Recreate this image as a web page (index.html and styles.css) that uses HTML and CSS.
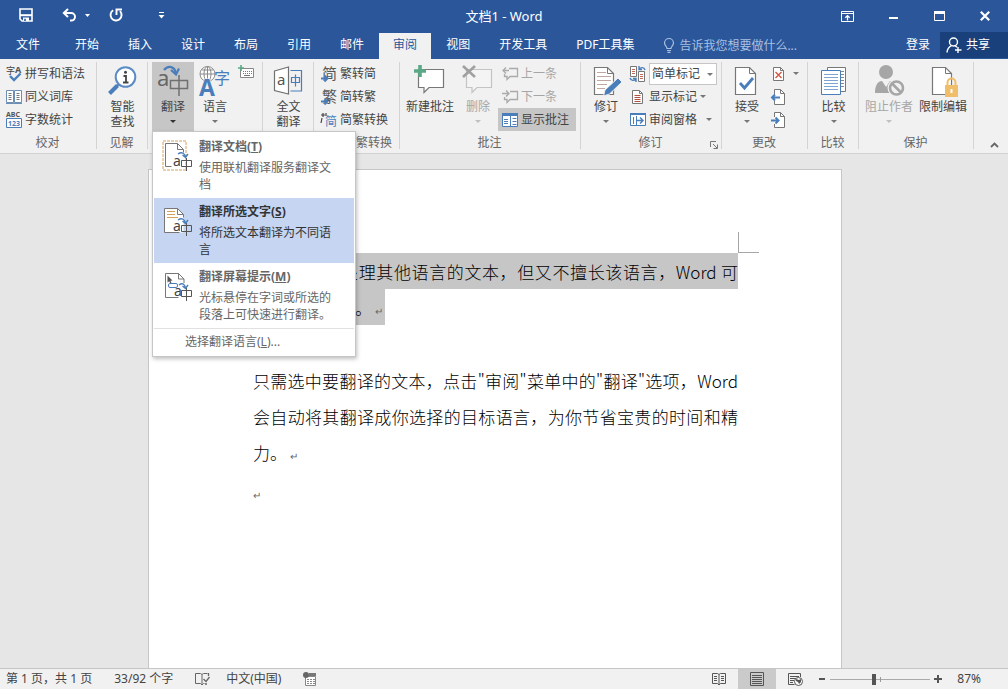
FILE: index.html
```html
<!DOCTYPE html>
<html lang="zh-CN">
<head>
<meta charset="utf-8">
<title>文档1 - Word</title>
<link rel="stylesheet" href="styles.css">
</head>
<body>
<div class="app">
  <header class="titlebar">
    <div class="quick">
      <button class="q-save" aria-label="保存"><svg width="14" height="14" viewBox="0 0 14 14"><path d="M1 1h12v12H3l-2-2z" fill="none" stroke="#fff" stroke-width="1.6"/><path d="M1 7.2h12" stroke="#fff" stroke-width="2"/><path d="M4 9.5h6V13H4z" fill="#fff"/><path d="M5.2 10.8h1.6V13H5.2z" fill="#2b579a"/></svg></button>
      <button class="q-undo" aria-label="撤消"><svg width="15" height="14" viewBox="0 0 15 14"><path d="M6 1 1.8 5 6 9M2 5h7.2a3.7 3.7 0 0 1 0 7.6H8" fill="none" stroke="#fff" stroke-width="2"/></svg></button>
      <button class="q-more" aria-label="撤消列表"><svg width="5" height="3" viewBox="0 0 5 3"><path d="M0 0h5L2.500 3z" fill="#fff"/></svg></button>
      <button class="q-redo" aria-label="重复"><svg width="14" height="14" viewBox="0 0 14 14"><path d="M11 3.200A5.500 5.500 0 1 1 4.200 2.300" fill="none" stroke="#fff" stroke-width="1.900"/><path d="M7.500 7V1.500H13" fill="none" stroke="#fff" stroke-width="1.900"/></svg></button>
      <button class="q-custom" aria-label="自定义快速访问工具栏"><svg width="7" height="7" viewBox="0 0 7 7"><path d="M1 .5h5" stroke="#fff"/><path d="M.5 3h6l-3 3.500z" fill="#fff"/></svg></button>
    </div>
    <h1 class="doc-title">文档1 - Word</h1>
    <div class="window-buttons">
      <button aria-label="功能区显示选项"><svg width="13" height="11" viewBox="0 0 13 11"><path d="M.5.5h12v10H.5zM.5 2.500h12" fill="none" stroke="#fff"/><path d="M6.500 9.500V5M4.300 6.800l2.200-2.200 2.200 2.200" fill="none" stroke="#fff" stroke-width="1.300"/></svg></button>
      <button aria-label="最小化"><svg width="9" height="11" viewBox="0 0 9 11"><path d="M0 7h9" stroke="#fff" stroke-width="2"/></svg></button>
      <button aria-label="最大化"><svg width="11" height="10" viewBox="0 0 11 10"><path d="M.5.5h10v9H.5z" fill="none" stroke="#fff"/><path d="M0 1.500h11" stroke="#fff" stroke-width="3"/></svg></button>
      <button aria-label="关闭"><svg width="10" height="10" viewBox="0 0 10 10"><path d="m.8.8 8.400 8.400m0-8.400L.8 9.200" stroke="#fff" stroke-width="2.200"/></svg></button>
    </div>
  </header>

  <nav class="tabs">
    <button class="tab tab-file">文件</button>
    <button class="tab">开始</button>
    <button class="tab">插入</button>
    <button class="tab">设计</button>
    <button class="tab">布局</button>
    <button class="tab">引用</button>
    <button class="tab">邮件</button>
    <button class="tab tab-active">审阅</button>
    <button class="tab">视图</button>
    <button class="tab">开发工具</button>
    <button class="tab">PDF工具集</button>
    <label class="tell-me"><svg width="12" height="15" viewBox="0 0 12 15"><path d="M4 10.500C4 8.500 1.500 7.800 1.500 5a4.500 4.500 0 0 1 9 0C10.500 7.800 8 8.500 8 10.500zM4 12.500h4M4.500 14.300h3" fill="none" stroke="#a9bfe0" stroke-width="1.200"/></svg><input type="text" placeholder="告诉我您想要做什么..." aria-label="告诉我您想要做什么"></label>
    <button class="sign-in">登录</button>
    <button class="share"><svg width="16" height="16" viewBox="0 0 16 16"><circle cx="7.500" cy="5" r="4" fill="none" stroke="#fff" stroke-width="1.400"/><path d="M1 15.500c.3-3.500 2-5.500 4.500-6.800M9 8.600l2 1.600M12 10v6M9 13h6.500" fill="none" stroke="#fff" stroke-width="1.400"/></svg>共享</button>
  </nav>

  <section class="ribbon">
    <div class="group g-proof">
      <div class="group-body">
        <div class="rows">
          <button class="row"><svg width="16" height="16" viewBox="0 0 16 16"><text x="0" y="8" font-size="9" fill="#444">字</text><text x="9" y="7" font-size="9" font-weight="bold" fill="#555">A</text><path d="m4 10 4 4 6.500-6.500" fill="none" stroke="#4a7ebb" stroke-width="2.400"/></svg>拼写和语法</button>
          <button class="row"><svg width="16" height="16" viewBox="0 0 16 16"><path d="M.5 1.500h7v12h-7zM8.500 1.500h7v12h-7z" fill="#fff" stroke="#6d8fb5"/><path d="M0 14.500h16" stroke="#6d8fb5"/><path d="M2.500 4.500h3m-3 2h3m-3 2h3m-3 2h3m5-6h3m-3 2h3m-3 2h3m-3 2h3" stroke="#777"/></svg>同义词库</button>
          <button class="row"><svg width="16" height="16" viewBox="0 0 16 16"><text x="0" y="5" font-size="7" font-weight="bold" fill="#555">ABC</text><path d="M.5 6.500h15v9H.5z" fill="#fff" stroke="#4a7ebb"/><text x="2" y="14" font-size="7" font-weight="bold" fill="#4a7ebb">123</text></svg>字数统计</button>
        </div>
      </div>
      <div class="group-label">校对</div>
    </div>

    <div class="group g-insight">
      <div class="group-body">
        <button class="large w-46"><svg width="32" height="32" viewBox="0 0 32 32"><path d="M2.500 28.500l8-8" stroke="#4a7ebb" stroke-width="4"/><path d="M10 21l3-3" stroke="#4a7ebb" stroke-width="2"/><circle cx="18.500" cy="12" r="9.800" fill="#fff" stroke="#5c8cc4" stroke-width="2"/><circle cx="18.500" cy="7.300" r="1.500" fill="#444"/><path d="M16.500 11h2.500v6.500M16 17.500h5.500" fill="none" stroke="#444" stroke-width="1.800"/></svg><span>智能</span><span>查找</span></button>
      </div>
      <div class="group-label">见解</div>
    </div>

    <div class="group g-lang">
      <div class="group-body">
        <div class="menu-anchor">
          <button class="large w-42 pressed" aria-haspopup="menu" aria-expanded="true"><svg width="32" height="32" viewBox="0 0 32 32"><text x="0" y="21" font-size="22" fill="#666">a</text><path d="M13.500 15.500h17v8h-17zM22 10v21" fill="none" stroke="#707070" stroke-width="1.500"/><path d="M7 5c4-5 11-4 12 4" fill="none" stroke="#4a7ebb" stroke-width="2.200"/><path d="m14 5 5 4.500 3-6" fill="none" stroke="#4a7ebb" stroke-width="2.200"/></svg><span>翻译</span><i class="caret caret-dark"></i></button>
          <div class="menu" role="menu">
            <button class="menu-item" role="menuitem">
              <svg width="32" height="34" viewBox="0 0 32 34"><path d="M1 1h23v29H1z" fill="none" stroke="#d2a15c" stroke-dasharray="3 1"/><path d="M3.500 3.500h12l6 6v3M3.500 3.500v23h6M15.500 3.500v6h6" fill="none" stroke="#777"/><text x="11" y="26" font-size="14" fill="#444">a</text><path d="M19.500 20.500h10v6h-10zM24.500 18v13" fill="none" stroke="#555"/><path d="M16 14c4-3 7 0 7.500 3M20.500 15l3 2.500 2.500-3.500" fill="none" stroke="#4a7ebb" stroke-width="1.400"/></svg>
              <span class="menu-text"><b>翻译文档(<u>T</u>)</b><span>使用联机翻译服务翻译文档</span></span>
            </button>
            <button class="menu-item selected" role="menuitem">
              <svg width="32" height="34" viewBox="0 0 32 34"><path d="M2.500 3.500h13l6 6v18h-19z" fill="#fff"/><path d="M2.500 27.500v-24h13l6 6v3M2.500 27.500h15M15.500 3.500v6h6" fill="none" stroke="#777"/><path d="M5 6.500h8m-8 3h8m-8 3h11" stroke="#d2a15c"/><text x="11" y="26" font-size="14" fill="#444">a</text><path d="M19.500 20.500h10v6h-10zM24.500 18v13" fill="none" stroke="#555"/><path d="M16 15c4-3 7 0 7.500 3M20.500 16l3 2.500 2.500-3.500" fill="none" stroke="#4a7ebb" stroke-width="1.400"/></svg>
              <span class="menu-text"><b>翻译所选文字(<u>S</u>)</b><span>将所选文本翻译为不同语言</span></span>
            </button>
            <button class="menu-item" role="menuitem">
              <svg width="32" height="34" viewBox="0 0 32 34"><path d="M3.500 3.500h13l5.500 5.500v4M3.500 3.500v24h13M16.500 3.500v5.500h5.500" fill="none" stroke="#777"/><path d="m5.500 5.500 5 5-2 .3 1.200 2.700-1.200.5-1.200-2.700-1.800 1.200z" fill="#555"/><rect x="6.500" y="13.500" width="9" height="4" rx="1.500" fill="#fff" stroke="#4a7ebb"/><text x="12" y="26" font-size="14" fill="#444">a</text><path d="M19.500 20.500h10v6h-10zM24.500 18v13" fill="none" stroke="#555"/><path d="M17 15c4-3 6 0 6.500 3M20.500 16l3 2.500 2.500-3.500" fill="none" stroke="#4a7ebb" stroke-width="1.400"/></svg>
              <span class="menu-text"><b>翻译屏幕提示(<u>M</u>)</b><span>光标悬停在字词或所选的段落上可快速进行翻译。</span></span>
            </button>
            <button class="menu-last" role="menuitem">选择翻译语言(<u>L</u>)...</button>
          </div>
        </div>
        <button class="large w-42"><svg width="32" height="32" viewBox="0 0 32 32"><g fill="#fff" stroke="#8a8a8a"><circle cx="8.500" cy="9" r="7.500"/><ellipse cx="8.500" cy="9" rx="3.500" ry="7.500"/><path d="M8.500 1.500v15M1 9h15M3 5h11"/></g><text x="15" y="19" font-size="16" fill="#4a7ebb">字</text><text x="0" y="31" font-size="23" font-weight="bold" fill="#4a7ebb" stroke="#f1f1f1" stroke-width="1" paint-order="stroke">A</text></svg><span>语言</span><i class="caret"></i></button>
        <button class="icon-only" aria-label="输入法键盘"><svg width="16" height="14" viewBox="0 0 16 14"><path d="M2.500 3.500h13v9h-13z" fill="#fff" stroke="#888"/><path d="M5 6.500h9M5 8.500h9" stroke="#777" stroke-dasharray="1 1"/><path d="M6 10.500h6" stroke="#777"/><path d="M3 0v6M0 3h6" stroke="#5ba886" stroke-width="1.600"/></svg></button>
      </div>
      <div class="group-label">语言</div>
    </div>

    <div class="group g-full">
      <div class="group-body">
        <button class="large w-46"><svg width="32" height="32" viewBox="0 0 32 32"><path d="M1.500 6l14-4v27l-14-3.500z" fill="#fff" stroke="#707070" stroke-width="1.200"/><text x="4" y="20" font-size="15" fill="#555">a</text><path d="M17.500 5.500h11v20.500h-11" fill="none" stroke="#4a7ebb" stroke-width="1.200"/><path d="M18.500 12.500h8v5h-8zM22.500 9.500v12" fill="none" stroke="#4a7ebb" stroke-width="1.200"/></svg><span>全文</span><span>翻译</span></button>
      </div>
    </div>

    <div class="group g-convert">
      <div class="group-body">
        <div class="rows">
          <button class="row"><svg width="16" height="16" viewBox="0 0 16 16"><text x="1" y="13" font-size="15" fill="#555">简</text><path d="M0 12.500h6M3.500 9.500l3 3-3 3" fill="none" stroke="#4a7ebb" stroke-width="1.800"/></svg>繁转简</button>
          <button class="row"><svg width="16" height="16" viewBox="0 0 16 16"><text x="1" y="13" font-size="15" fill="#555">繁</text><path d="M0 12.500h6M3.500 9.500l3 3-3 3" fill="none" stroke="#4a7ebb" stroke-width="1.800"/></svg>简转繁</button>
          <button class="row"><svg width="16" height="16" viewBox="0 0 16 16"><text x="4" y="14" font-size="12" fill="#4a7ebb">简</text><path d="M2 1v4M0 3h4M1 6l-1 5M5 1v3" stroke="#444" stroke-width="1.200"/></svg>简繁转换</button>
        </div>
      </div>
      <div class="group-label">中文简繁转换</div>
    </div>

    <div class="group g-comment">
      <div class="group-body">
        <button class="large w-56"><svg width="32" height="32" viewBox="0 0 32 32"><path d="M4.500 4.500h25v18H15l-5 5v-5H4.500z" fill="#fff" stroke="#777" stroke-width="1.200"/><path d="M6 0v12M0 6h12" stroke="#5ba886" stroke-width="3.600"/></svg><span>新建批注</span></button>
        <button class="large w-40 off" disabled><svg width="32" height="32" viewBox="0 0 32 32"><path d="M4.500 4.500h25v18H15l-5 5v-5H4.500z" fill="#f4f4f4" stroke="#c4c4c4" stroke-width="1.200"/><path d="m1 1 12 11M13 1 1 12" stroke="#a0a0a0" stroke-width="2.600"/></svg><span>删除</span><i class="caret"></i></button>
        <div class="rows">
          <button class="row row-pad off" disabled><svg width="16" height="16" viewBox="0 0 16 16"><path d="M7 2.500h8.500v8H8l-3 3v-3H2.500V8M1 4.500h6M4 1.500l-3 3 3 3" fill="none" stroke="#aaa" stroke-width="1.300"/></svg>上一条</button>
          <button class="row row-pad off" disabled><svg width="16" height="16" viewBox="0 0 16 16"><path d="M8 2.500h7.500v8H8l-3 3v-3H2.500V8M0 4.500h7M4 1.500l3 3-3 3" fill="none" stroke="#aaa" stroke-width="1.300"/></svg>下一条</button>
          <button class="row row-pad pressed"><svg width="16" height="16" viewBox="0 0 16 16"><path d="M.5 1.500h15v13H.5z" fill="#fff" stroke="#4a7ebb"/><path d="M0 2.500h16" stroke="#4a7ebb" stroke-width="3"/><path d="M8.500 4v10" stroke="#4a7ebb"/><path d="M2 7.500h4m-4 2h4m-4 2h4m4.500-5h4m-4 3h4m-4 3h4" stroke="#4a7ebb"/></svg>显示批注</button>
        </div>
      </div>
      <div class="group-label">批注</div>
    </div>

    <div class="group g-track">
      <div class="group-body">
        <button class="large w-46"><svg width="32" height="32" viewBox="0 0 32 32"><path d="M4.500 2.500h13l6 6v21h-19z" fill="#fff" stroke="#777" stroke-width="1.200"/><path d="M17.500 2.500v6h6" fill="none" stroke="#777"/><path d="M7 7.500h9m-9 4h14m-14 4h14m-14 4h10m-10 4h8" stroke="#c0a8a0"/><path d="m13.500 31 1.500-6 13-12 4 4-12.500 12z" fill="#4a7ebb" stroke="#f1f1f1"/></svg><span>修订</span><i class="caret"></i></button>
        <div class="rows">
          <div class="row"><svg width="16" height="16" viewBox="0 0 16 16"><path d="M.5.5h6v10h-6zM8.500 5.500h6v10h-6z" fill="#fff" stroke="#777"/><path d="M2 3.500h3m-3 2h3m-3 2h3m5 1h3m-3 2h3m-3 2h3" stroke="#c06a5a"/><path d="M15 4c-1-3-4-3-6-1M9 0v3.500h3M0 12c1 3 4 3 6 1M6 16v-3.500H3" fill="none" stroke="#4a7ebb" stroke-width="1.400"/></svg><span class="combo"><select aria-label="显示以供审阅"><option>简单标记</option></select><i class="caret"></i></span></div>
          <button class="row"><svg width="16" height="16" viewBox="0 0 16 16"><path d="M2.500 1.500h7l3 3v10h-10z" fill="#fff" stroke="#777"/><path d="M9.500 1.500v3h3" fill="none" stroke="#777"/><path d="M4.500 6.500h6m-6 2h6m-6 2h6m-6 2h6" stroke="#b5503c"/></svg>显示标记<i class="caret"></i></button>
          <button class="row"><svg width="16" height="16" viewBox="0 0 16 16"><path d="M.5 1.500h15v12H.5z" fill="#fff" stroke="#4a7ebb"/><path d="M0 2h16" stroke="#4a7ebb" stroke-width="2"/><path d="M3.500 5v7M6.500 4v9" stroke="#4a7ebb"/><path d="M7 8.500h6M10 5.500l3 3-3 3" fill="none" stroke="#4a7ebb" stroke-width="1.400"/></svg>审阅窗格<i class="caret caret-far"></i></button>
        </div>
      </div>
      <div class="group-label">修订</div>
      <button class="launcher" aria-label="修订选项"><svg width="8" height="8" viewBox="0 0 8 8"><path d="M.5 6V.5H6M3 3l4 4M7.500 3.500v4h-4" fill="none" stroke="#777"/></svg></button>
    </div>

    <div class="group g-change">
      <div class="group-body">
        <button class="large w-46"><svg width="32" height="32" viewBox="0 0 32 32"><path d="M4.500 2.500h14l6 6v21h-20z" fill="#fff" stroke="#777" stroke-width="1.200"/><path d="M18.500 2.500v6h6" fill="none" stroke="#777"/><path d="m9 18 4.500 5 8.500-10" fill="none" stroke="#4a7ebb" stroke-width="2.800"/></svg><span>接受</span><i class="caret"></i></button>
        <div class="rows">
          <button class="row row-wide" aria-label="拒绝"><svg width="16" height="16" viewBox="0 0 16 16"><path d="M2.500 1.500h7l3 3v10h-10z" fill="#fff" stroke="#777"/><path d="M9.500 1.500v3h3" fill="none" stroke="#777"/><path d="m4.500 6 6 6m0-6-6 6" stroke="#d0563f" stroke-width="1.300"/></svg><i class="caret"></i></button>
          <button class="row" aria-label="上一处修订"><svg width="16" height="16" viewBox="0 0 16 16"><path d="M3.500 5V.5h6l4 4v11h-10V12" fill="#fff" stroke="#777"/><path d="M9.500.5v4h4" fill="none" stroke="#777"/><path d="M1 8.500h8M4 5.500l-3 3 3 3" fill="none" stroke="#4a7ebb" stroke-width="2"/></svg></button>
          <button class="row" aria-label="下一处修订"><svg width="16" height="16" viewBox="0 0 16 16"><path d="M3.500 5V.5h6l4 4v11h-10V12" fill="#fff" stroke="#777"/><path d="M9.500.5v4h4" fill="none" stroke="#777"/><path d="M0 8.500h7M4.500 5.500l3 3-3 3" fill="none" stroke="#4a7ebb" stroke-width="2"/></svg></button>
        </div>
      </div>
      <div class="group-label">更改</div>
    </div>

    <div class="group g-compare">
      <div class="group-body">
        <button class="large w-46"><svg width="32" height="32" viewBox="0 0 32 32"><path d="M9.500 2.500h18v24h-18z" fill="#fff" stroke="#777"/><path d="M22 6.500h4m-4 3h4m-4 3h4m-4 3h4m-4 3h4m-4 3h4" stroke="#888"/><path d="M3.500 5.500h19v24h-19z" fill="#fff" stroke="#4a7ebb"/><path d="M6 9.500h14m-14 3h14m-14 3h14m-14 3h14m-14 3h14m-14 3h14" stroke="#7fa3cf"/></svg><span>比较</span><i class="caret"></i></button>
      </div>
      <div class="group-label">比较</div>
    </div>

    <div class="group g-protect">
      <div class="group-body">
        <button class="large w-54 off" disabled><svg width="32" height="32" viewBox="0 0 32 32"><circle cx="13" cy="7" r="7" fill="#a6a6a6"/><path d="M2 28c0-8 3-12 7-12l4 6 4-6c4 0 5 3 5 5v7z" fill="#a6a6a6"/><circle cx="23.500" cy="23" r="9" fill="#f1f1f1"/><circle cx="23.500" cy="23" r="6.500" fill="none" stroke="#a6a6a6" stroke-width="2.600"/><path d="m19 18.500 9 9" stroke="#a6a6a6" stroke-width="2.600"/></svg><span>阻止作者</span><i class="caret"></i></button>
        <button class="large w-54"><svg width="32" height="32" viewBox="0 0 32 32"><path d="M5.500 2.500h13l6 6v21h-19z" fill="#fff" stroke="#777" stroke-width="1.200"/><path d="M18.500 2.500v6h6" fill="none" stroke="#777"/><path d="M20.500 21v-3.500a4 4 0 0 1 8 0V21" fill="none" stroke="#f0bd68" stroke-width="2"/><path d="M18 20h13v12H18z" fill="#f0bd68"/><path d="M24.500 24v4" stroke="#fff" stroke-width="2"/></svg><span>限制编辑</span></button>
      </div>
      <div class="group-label">保护</div>
    </div>
    <button class="collapse" aria-label="折叠功能区"><svg width="9" height="6" viewBox="0 0 9 6"><path d="m1 5 3.500-3.500L8 5" fill="none" stroke="#666" stroke-width="1.800"/></svg></button>
  </section>

  <main class="workspace">
    <article class="page">
      <i class="corner"></i>
      <p><mark>如果你需要处理其他语言的文本，但又不擅长该语言，Word 可以帮助你翻译。<span class="pilcrow">↵</span></mark></p>
      <p class="next">只需选中要翻译的文本，点击"审阅"菜单中的"翻译"选项，Word 会自动将其翻译成你选择的目标语言，为你节省宝贵的时间和精力。<span class="pilcrow">↵</span></p>
      <p class="blank"><span class="pilcrow">↵</span></p>
    </article>
  </main>

  <footer class="status">
    <span>第 1 页，共 1 页</span>
    <span>33/92 个字</span>
    <button aria-label="校对"><svg width="15" height="14" viewBox="0 0 15 14"><path d="M7 2.500 5.500 1.500h-5v10h5L7 13zM7 2.500l1.500-1h4M7 13l1.500-1.500h1" fill="none" stroke="#666"/><path d="M13.500 1v3m-5 3 2.500 2.500L14.500 5M10 12h2" fill="none" stroke="#666" stroke-width="1.300"/></svg></button>
    <span>中文(中国)</span>
    <button aria-label="宏录制"><svg width="14" height="14" viewBox="0 0 14 14"><path d="M2.500 4.500h10v9h-10z" fill="#fff" stroke="#888"/><path d="M6 2.500h7" stroke="#777" stroke-width="3"/><path d="M4 7.500h8m-8 2h8m-8 2h8" stroke="#888" stroke-dasharray="2 1"/><circle cx="3" cy="3" r="3" fill="#666"/></svg></button>
    <div class="views">
      <button aria-label="阅读视图"><svg width="14" height="14" viewBox="0 0 14 14"><path d="M7 2.500 5.500 1.500h-5v10h5L7 13l1.500-1.500h5v-10h-5zM7 2.500V13" fill="none" stroke="#555"/><path d="M2 4.500h3m-3 2h3m-3 2h3m4-4h3m-3 2h3m-3 2h3" stroke="#555"/></svg></button>
      <button class="view-on" aria-label="页面视图"><svg width="14" height="14" viewBox="0 0 14 14"><path d="M.5.5h13v13H.5z" fill="none" stroke="#555"/><path d="M2 3.500h10m-10 2h10m-10 2h10m-10 2h10m-10 2h10" stroke="#555"/></svg></button>
      <button aria-label="Web 版式视图"><svg width="15" height="14" viewBox="0 0 15 14"><path d="M12.500 5V1.500H.5v11h6" fill="none" stroke="#555"/><path d="M2 4.500h9m-9 2h6m-6 2h4m-4 2h3" stroke="#555"/><circle cx="10.500" cy="9.500" r="4" fill="#fff" stroke="#555"/><path d="M8 7l3 1 2-1v3l-2 2-1-2-2-1z" fill="#555"/></svg></button>
    </div>
    <button class="zoom-btn" aria-label="缩小"><svg width="8" height="8" viewBox="0 0 8 8"><path d="M1 4h6" stroke="#555" stroke-width="2"/></svg></button>
    <input class="zoom" type="range" min="0" max="100" value="43" aria-label="显示比例">
    <button class="zoom-btn" aria-label="放大"><svg width="8" height="8" viewBox="0 0 8 8"><path d="M0 4h8M4 0v8" stroke="#555" stroke-width="2"/></svg></button>
    <span class="percent">87%</span>
  </footer>
</div>
</body>
</html>
```
FILE: styles.css
```css
* { box-sizing: border-box; }

body {
  margin: 0;
  font-family: "Noto Sans", "Noto Sans CJK SC", sans-serif;
  font-size: 12px;
  line-height: 16px;
  color: #444;
}

button, input, select {
  margin: 0;
  padding: 0;
  border: 0;
  background: none;
  color: inherit;
  font: inherit;
}

svg { display: block; flex: none; overflow: visible; }

.app { display: flex; flex-direction: column; height: 100vh; }

/* title bar */
.titlebar {
  display: grid;
  grid-template-columns: 1fr auto 1fr;
  align-items: center;
  height: 32px;
  background: #2b579a;
  color: #fff;
}
.quick { display: flex; align-items: center; padding: 0 0 2px 19px; }
.q-undo { margin-left: 29px; }
.q-more { margin-left: 8px; }
.q-redo { margin-left: 19px; }
.q-custom { margin-left: 35px; }
.doc-title { margin: 0; font-size: 13px; font-weight: 400; }
.window-buttons { display: flex; justify-content: flex-end; }
.window-buttons button {
  display: flex;
  align-items: center;
  justify-content: center;
  width: 46px;
  height: 30px;
}

/* tabs */
.tabs {
  display: flex;
  gap: 1px;
  height: 27px;
  background: #2b579a;
  color: #fff;
}
.tab { height: 27px; padding: 0 14px 2px; white-space: nowrap; }
.tab-file { padding: 0 20px 2px 16px; }
.tab-active { background: #f1f1f1; color: #2b579a; margin-top: 1px; height: 26px; }
.tell-me {
  display: flex;
  flex: 1;
  align-items: center;
  gap: 4px;
  min-width: 0;
  padding-left: 14px;
}
.tell-me input { width: 100%; min-width: 0; }
.tell-me input::placeholder { color: #a9bfe0; opacity: 1; }
.sign-in { padding: 0 9px 2px; white-space: nowrap; }
.share {
  display: flex;
  align-items: center;
  gap: 4px;
  height: 26px;
  padding: 0 18px 0 6px;
  background: #19407a;
  white-space: nowrap;
}

/* ribbon */
.ribbon {
  position: relative;
  z-index: 1;
  display: flex;
  padding-top: 3px;
  background: #f1f1f1;
  border-bottom: 1px solid #d2d2d2;
}
.group { position: relative; flex: none; padding-bottom: 2px; }
.group::after {
  content: "";
  position: absolute;
  top: 0;
  right: 0;
  bottom: 4px;
  width: 1px;
  background: #d4d4d4;
}
.g-proof { width: 97px; }
.g-insight { width: 51px; }
.g-lang { width: 115px; }
.g-full { width: 51px; }
.g-convert { width: 86px; }
.g-comment { width: 181px; }
.g-track { width: 141px; }
.g-change { width: 86px; }
.g-compare { width: 51px; }
.g-protect { width: 115px; }
.group-body { display: flex; height: 69px; }
.g-proof .group-body { padding-left: 6px; }
.g-insight .group-body,
.g-full .group-body,
.g-compare .group-body { justify-content: center; }
.g-lang .group-body { padding-left: 4px; }
.g-convert .group-body { padding-left: 7px; }
.g-comment .group-body { padding-left: 2px; }
.g-track .group-body,
.g-change .group-body { padding-left: 2px; gap: 1px; }
.g-protect .group-body { padding-left: 3px; }
.group-label {
  height: 20px;
  padding-right: 2px;
  line-height: 24px;
  text-align: center;
  color: #666;
}

.rows { display: flex; flex-direction: column; }
.row {
  display: flex;
  align-items: center;
  gap: 3px;
  height: 23px;
  white-space: nowrap;
}
.row-pad { padding: 0 7px 0 4px; }
.row-wide { gap: 6px; }
.large {
  display: flex;
  flex-direction: column;
  align-items: center;
  height: 69px;
  padding-top: 3px;
  line-height: 15px;
  white-space: nowrap;
}
.large svg { margin-bottom: 2px; }
.large .caret { margin-top: 6px; }
.w-40 { width: 40px; }
.w-42 { width: 42px; }
.w-46 { width: 46px; }
.w-54 { width: 54px; }
.w-56 { width: 56px; }
.pressed { background: #c6c6c6; }
.off { color: #a6a6a6; }
.caret {
  width: 0;
  height: 0;
  border: 3px solid transparent;
  border-top-color: #777;
  border-bottom: 0;
}
.caret-dark { border-top-color: #333; }
.off .caret { border-top-color: #c0c0c0; }
.caret-far { margin-left: 6px; }
.icon-only { align-self: flex-start; padding: 3px 0 0 2px; }
.combo { position: relative; display: block; }
.combo select {
  appearance: none;
  display: block;
  width: 68px;
  height: 22px;
  padding-left: 2px;
  background: #fff;
  border: 1px solid #c6c6c6;
}
.combo .caret { position: absolute; top: 10px; right: 4px; pointer-events: none; }
.launcher { position: absolute; right: 4px; bottom: 4px; }
.collapse { margin-left: auto; padding: 0 9px 5px 0; align-self: flex-end; }

/* drop-down menu over the document */
.menu-anchor { position: relative; }
.menu {
  position: absolute;
  top: 69px;
  left: 0;
  z-index: 2;
  width: 204px;
  padding: 1px;
  background: #fff;
  border: 1px solid #c6c6c6;
  box-shadow: 1px 2px 4px rgba(0, 0, 0, .25);
}
.menu-item {
  display: flex;
  gap: 5px;
  width: 100%;
  padding: 5px 15px 5px 8px;
  text-align: left;
  color: #666;
}
.menu-item svg { margin-top: 2px; }
.menu-text b { display: block; line-height: 18px; margin-bottom: 3px; }
.menu-text > span { display: block; line-height: 17px; }
.selected { background: #c5d5f2; color: #333; }
.menu-last {
  display: block;
  width: 100%;
  height: 27px;
  padding-left: 31px;
  border-top: 1px solid #e1e1e1;
  text-align: left;
  color: #666;
}

/* document */
.workspace {
  display: flex;
  flex: 1;
  justify-content: center;
  min-height: 0;
  overflow: hidden;
  padding: 15px 18px 0 0;
  background: #e6e6e6;
}
.page {
  position: relative;
  width: 100%;
  max-width: 694px;
  padding: 84px 103px 0 104px;
  background: #fff;
  border: 1px solid #c6c6c6;
  border-bottom: 0;
  font-family: "Noto Sans CJK SC", sans-serif;
  font-size: 17px;
  font-weight: 300;
  line-height: 36px;
  color: #000;
}
.page p { margin: 0; text-align: justify; }
.page .next { margin-top: 37px; }
.page .blank { margin-top: 3px; }
.page mark { padding: 6px 0 5px; background: #c6c6c6; color: inherit; }
.pilcrow { padding: 0 2px 0 3px; font-size: 10px; line-height: 16px; color: #666; }
.blank .pilcrow { padding: 0; }
.corner {
  position: absolute;
  top: 62px;
  right: 82px;
  width: 21px;
  height: 21px;
  border: solid #a6a6a6;
  border-width: 0 0 1px 1px;
}

/* status bar */
.status {
  display: flex;
  align-items: center;
  height: 21px;
  padding: 0 27px 0 6px;
  background: #f1f1f1;
  border-top: 1px solid #c6c6c6;
  white-space: nowrap;
}
.status > span { margin-right: 22px; }
.status > button { margin-right: 16px; }
.views { display: flex; margin-left: auto; align-self: stretch; }
.views button {
  display: flex;
  align-items: center;
  justify-content: center;
  width: 38px;
}
.views .view-on { background: #cacaca; }
.status .zoom-btn { margin: 0 4px; }
.zoom {
  appearance: none;
  width: 100px;
  height: 12px;
  background:
    linear-gradient(#999, #999) 50px 50% / 1px 5px no-repeat,
    linear-gradient(#aaa, #aaa) 0 50% / 100% 1px no-repeat;
}
.zoom::-webkit-slider-thumb {
  appearance: none;
  width: 4px;
  height: 11px;
  background: #555;
}
.status .percent { margin: 0 0 0 11px; }
```
